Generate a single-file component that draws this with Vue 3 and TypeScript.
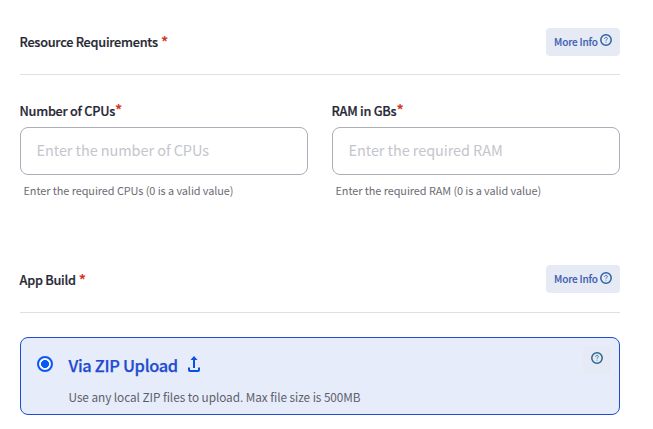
<script setup lang="ts">
import { ref } from 'vue'

interface Field {
  id: string
  label: string
  placeholder: string
  help: string
}

const fields: Field[] = [
  {
    id: 'cpus',
    label: 'Number of CPUs',
    placeholder: 'Enter the number of CPUs',
    help: 'Enter the required CPUs (0 is a valid value)',
  },
  {
    id: 'ram',
    label: 'RAM in GBs',
    placeholder: 'Enter the required RAM',
    help: 'Enter the required RAM (0 is a valid value)',
  },
]

const buildType = ref('zip')
</script>

<template>
  <main class="form">
    <section class="resources">
      <header class="section-head">
        <h2 class="title">Resource Requirements <span class="star">*</span></h2>
        <button class="more" type="button">
          <span>More Info</span>
          <svg class="help-icon" viewBox="0 0 12 12" fill="none" stroke="currentColor">
            <circle cx="6" cy="6" r="5.2" stroke-width="1.5" />
            <path d="M4.6 4.8c0-1.9 2.8-1.8 2.8-.2 0 1-1.4 1-1.4 2.1M6 7.7v.9" stroke-width=".9" />
          </svg>
        </button>
      </header>
      <div class="fields">
        <div v-for="field in fields" :key="field.id" class="field">
          <label class="label" :for="field.id">{{ field.label }}<span class="star">*</span></label>
          <input :id="field.id" class="input" type="text" :placeholder="field.placeholder" />
          <p class="help">{{ field.help }}</p>
        </div>
      </div>
    </section>

    <section class="build">
      <header class="section-head">
        <h2 class="title">App Build <span class="star">*</span></h2>
        <button class="more" type="button">
          <span>More Info</span>
          <svg class="help-icon" viewBox="0 0 12 12" fill="none" stroke="currentColor">
            <circle cx="6" cy="6" r="5.2" stroke-width="1.5" />
            <path d="M4.6 4.8c0-1.9 2.8-1.8 2.8-.2 0 1-1.4 1-1.4 2.1M6 7.7v.9" stroke-width=".9" />
          </svg>
        </button>
      </header>
      <label class="option">
        <input v-model="buildType" class="radio" type="radio" value="zip" />
        <span class="option-body">
          <span class="option-title">
            <span class="option-name">Via ZIP Upload</span>
            <svg class="upload" viewBox="0 0 12 16" fill="none" stroke="currentColor" stroke-width="2">
              <path d="M6 12V2" />
              <path d="M6 0 L9.5 4 H2.5 Z" fill="currentColor" stroke="none" />
              <path d="M1 11.5v2.5q0 1 1 1h8q1 0 1-1v-2.5" />
            </svg>
          </span>
          <span class="option-text">Use any local ZIP files to upload. Max file size is 500MB</span>
        </span>
        <span class="tip">
          <svg class="help-icon" viewBox="0 0 12 12" fill="none" stroke="currentColor">
            <circle cx="6" cy="6" r="5.2" stroke-width="1.5" />
            <path d="M4.6 4.8c0-1.9 2.8-1.8 2.8-.2 0 1-1.4 1-1.4 2.1M6 7.7v.9" stroke-width=".9" />
          </svg>
        </span>
      </label>
    </section>
  </main>
</template>

<style>
body {
  background: #fff;
}
</style>

<style scoped>
* {
  box-sizing: border-box;
}

.form {
  width: 653px;
  height: 429px;
  padding: 28px 33px 0 20px;
  overflow: hidden;
  color: #272735;
  font-family: "Noto Sans CJK SC", "Noto Sans", sans-serif;
}

.resources {
  height: 237px;
}

.section-head {
  display: flex;
  justify-content: space-between;
  align-items: flex-start;
  height: 47px;
  border-bottom: 1px solid #e0e0e0;
}

.build .section-head {
  height: 48px;
}

.title,
.label {
  margin: 0 0 0 -0.5px;
  font-size: 12.7px;
  font-weight: 500;
  line-height: 20px;
  letter-spacing: -0.25px;
  white-space: nowrap;
  -webkit-text-stroke: 0.2px currentColor;
}

.title {
  padding-top: 4px;
}

.build .title {
  padding-top: 5px;
}

.star {
  color: #d83018;
  font-size: 15px;
  line-height: 1px;
  vertical-align: -1px;
}

.title .star {
  margin-left: 0.5px;
}

.label .star {
  vertical-align: 0;
}

.more {
  display: flex;
  gap: 2.5px;
  width: 74px;
  height: 28px;
  padding: 6px 8px;
  border: 0;
  border-radius: 4px;
  background: #e6eaf5;
  color: #3d5fb3;
  font-family: inherit;
  font-size: 10px;
  font-weight: 500;
  line-height: 15px;
  letter-spacing: -0.16px;
  white-space: nowrap;
  -webkit-text-stroke: 0.15px currentColor;
}

.help-icon {
  display: block;
  flex: none;
  width: 12px;
  height: 12px;
  color: #2c62a5;
}

.build .more .help-icon {
  margin-top: 1px;
}

.fields {
  display: grid;
  grid-template-columns: 1fr 1fr;
  gap: 24px;
  padding-top: 26px;
}

.label {
  display: block;
  height: 26px;
}

.input {
  display: block;
  width: 100%;
  height: 48px;
  padding: 0 16px 3px 15.5px;
  border: 1px solid #adadb8;
  border-radius: 8px;
  background: #fff;
  font-family: inherit;
  font-size: 14.5px;
  letter-spacing: -0.08px;
}

.input::placeholder {
  color: #c5c5cc;
  opacity: 1;
}

.help {
  margin: 6px 0 0 3.5px;
  color: #6c6c74;
  font-size: 10.9px;
  line-height: 18px;
  letter-spacing: -0.07px;
  white-space: nowrap;
}

.option {
  display: flex;
  height: 78px;
  margin-top: 24px;
  padding: 8px 8px 0 16px;
  border: 1px solid #1f4bd0;
  border-radius: 8px;
  background: #e6ecfa;
}

.radio {
  appearance: none;
  width: 16px;
  height: 16px;
  margin: 10px 15.5px 0 0;
  border: 2px solid #0b57f5;
  border-radius: 50%;
  background: radial-gradient(circle, #0b57f5 0 3.7px, #f4f7fe 4.3px);
}

.option-body {
  flex: 1;
}

.option-title {
  display: flex;
  align-items: flex-start;
  gap: 10px;
  height: 41px;
  color: #1f4bd0;
}

.option-name {
  padding-top: 6px;
  font-size: 16.4px;
  font-weight: 500;
  line-height: 26px;
  letter-spacing: -0.31px;
  white-space: nowrap;
  -webkit-text-stroke: 0.25px currentColor;
}

.upload {
  width: 12px;
  height: 16px;
  margin-top: 10px;
  color: #0850e8;
}

.option-text {
  display: block;
  color: #5e5f6b;
  font-size: 11.8px;
  line-height: 20px;
  letter-spacing: -0.06px;
}

.tip {
  width: 28px;
  height: 28px;
  padding: 6px 8px;
  border-radius: 4px;
  background: #e6eaf5;
}

.tip .help-icon {
  color: #276990;
}
</style>
